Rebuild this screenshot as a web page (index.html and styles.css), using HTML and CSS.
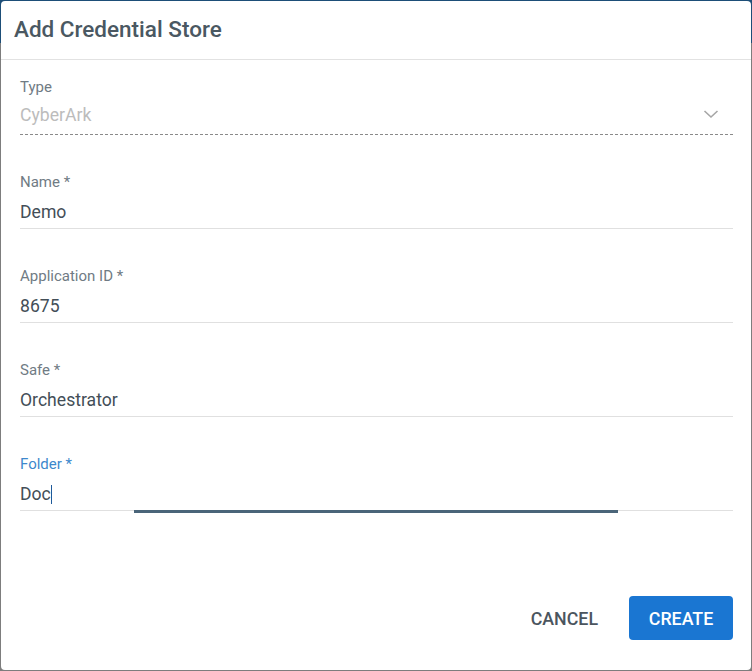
FILE: index.html
```html
<!DOCTYPE html>
<html lang="en">
<head>
<meta charset="utf-8">
<title>Add Credential Store</title>
<link rel="stylesheet" href="styles.css">
</head>
<body>
<div class="dialog">
  <div class="dialog-header">
    <h1 class="dialog-title">Add Credential Store</h1>
  </div>
  <div class="dialog-body">
    <div class="field field-select">
      <div class="field-label">Type</div>
      <div class="field-control select-control">
        <span class="field-value placeholder">CyberArk</span>
        <svg class="chevron" width="16" height="10" viewBox="0 0 16 10"><polyline points="1.5,2 8,8 14.5,2" fill="none" stroke="#a6a6a6" stroke-width="1.6"/></svg>
      </div>
    </div>
    <div class="field">
      <div class="field-label">Name *</div>
      <div class="field-control"><span class="field-value">Demo</span></div>
    </div>
    <div class="field">
      <div class="field-label">Application ID *</div>
      <div class="field-control"><span class="field-value">8675</span></div>
    </div>
    <div class="field">
      <div class="field-label">Safe *</div>
      <div class="field-control"><span class="field-value">Orchestrator</span></div>
    </div>
    <div class="field field-focused">
      <div class="field-label">Folder *</div>
      <div class="field-control"><span class="field-value">Doc<span class="caret"></span></span><span class="focus-bar"></span></div>
    </div>
  </div>
  <div class="dialog-actions">
    <button class="btn btn-text">CANCEL</button>
    <button class="btn btn-primary">CREATE</button>
  </div>
</div>
</body>
</html>
```
FILE: styles.css
```css
html, body {
  margin: 0;
  padding: 0;
}
body {
  width: 752px;
  height: 671px;
  background: linear-gradient(to bottom, #1d4e78 0, #1d4e78 43px, #7d7d7d 43px, #7d7d7d 100%);
  font-family: Roboto, "Noto Sans", "Liberation Sans", sans-serif;
  padding: 1px;
  box-sizing: border-box;
  overflow: hidden;
}
.dialog {
  background: #ffffff;
  height: 669px;
  border-radius: 4px;
  display: flex;
  flex-direction: column;
}
.dialog-header {
  height: 58px;
  border-bottom: 1px solid #e2e2e2;
  display: flex;
  align-items: center;
  padding-left: 13px;
}
.dialog-title {
  margin: 0;
  font-size: 22.5px;
  font-weight: 500;
  color: #4a5862;
  letter-spacing: 0;
  position: relative;
  top: -1px;
}
.dialog-body {
  padding: 19px 18px 0 19px;
}
.field {
  margin-top: 39px;
}
.field-select {
  margin-top: 0;
}
.field-label {
  font-size: 15px;
  line-height: 16px;
  color: #707b84;
}
.field-control {
  position: relative;
  margin-top: 12px;
  padding-bottom: 6px;
  border-bottom: 1px solid #e0e0e0;
  line-height: 20px;
  height: 20px;
}
.field-value {
  font-size: 17.6px;
  color: #434e57;
}
.placeholder {
  color: #bcbcbc;
}
.select-control {
  margin-top: 10px;
  padding-bottom: 9px;
  border-bottom: 1px dashed #8a8a8a;
  display: flex;
  justify-content: space-between;
  align-items: center;
}
.chevron {
  margin-right: 14px;
  margin-top: -2px;
}
.field-focused .field-label {
  color: #3d88cc;
}
.caret {
  display: inline-block;
  width: 1px;
  height: 19px;
  background: #1e5a9a;
  vertical-align: -4px;
}
.focus-bar {
  position: absolute;
  left: 114px;
  width: 484px;
  bottom: -3px;
  height: 3px;
  background: #4a6579;
}
.dialog-actions {
  margin-top: 85px;
  padding-right: 18px;
  display: flex;
  justify-content: flex-end;
  gap: 15px;
}
.btn {
  font-family: Roboto, "Noto Sans", "Liberation Sans", sans-serif;
  font-size: 17.8px;
  font-weight: 500;
  height: 44px;
  border: none;
  border-radius: 4px;
  cursor: pointer;
  letter-spacing: 0;
}
.btn-text {
  background: transparent;
  color: #4b555e;
  padding: 0 16px;
}
.btn-primary {
  background: #1a76d2;
  color: #ffffff;
  padding: 0 19px;
  width: 104px;
}
```
